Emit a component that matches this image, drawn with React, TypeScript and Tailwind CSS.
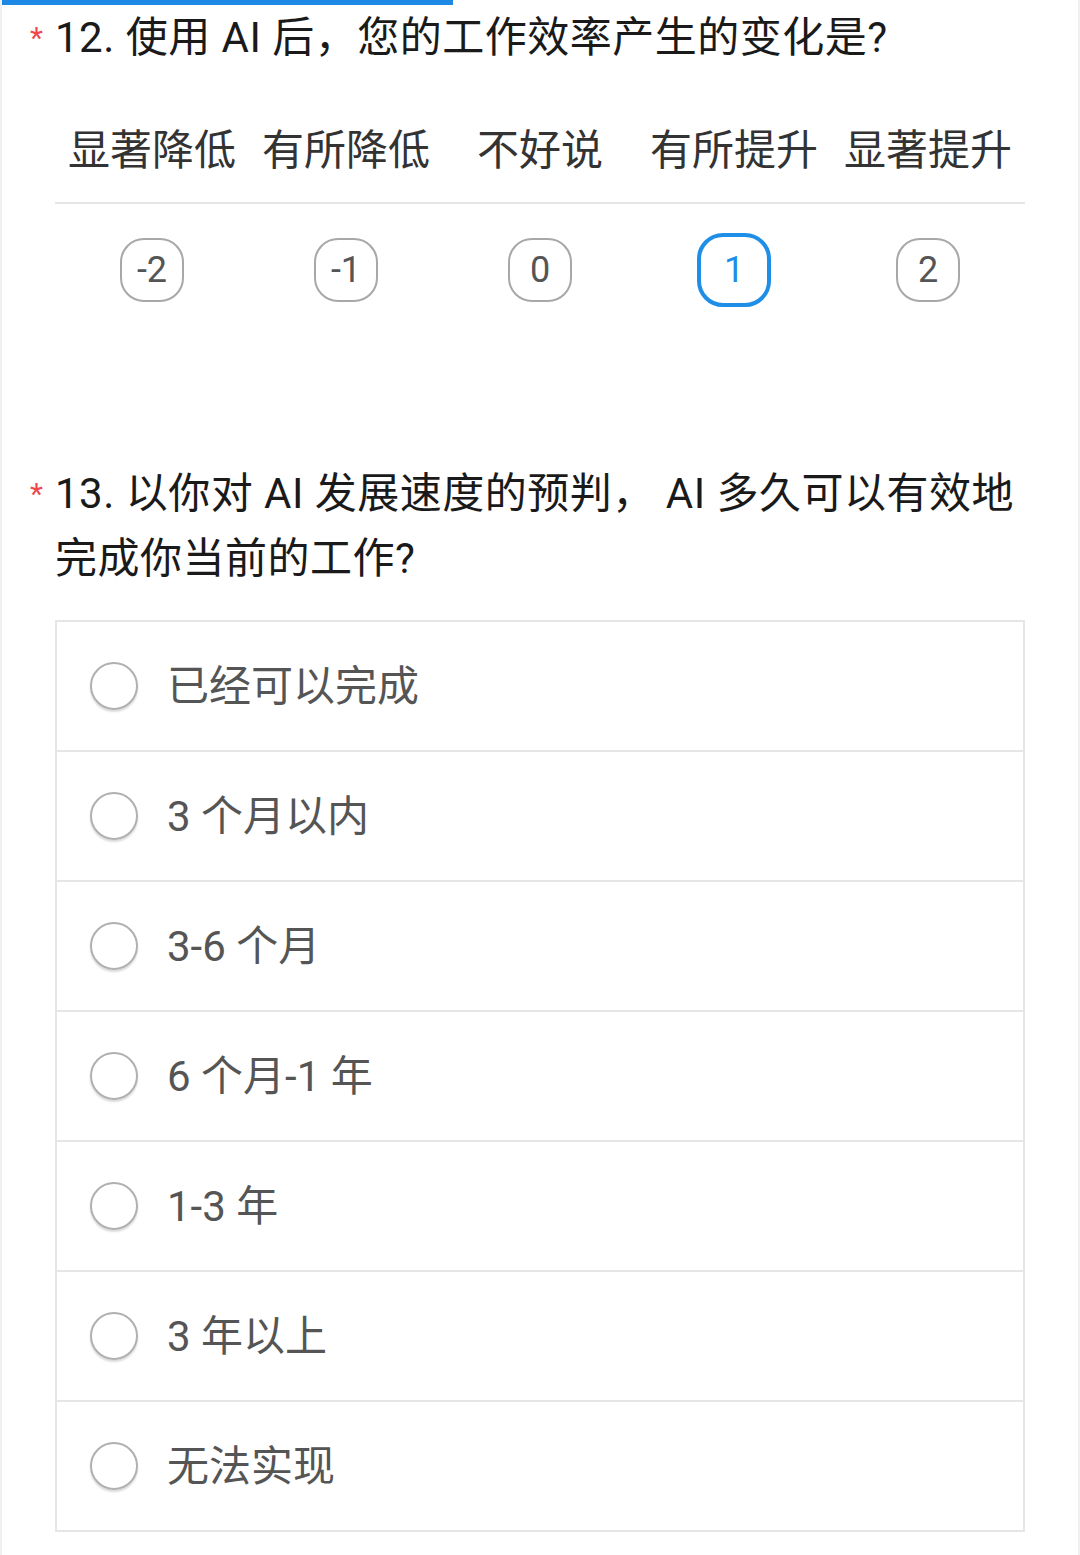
const scaleLabels = ['显著降低', '有所降低', '不好说', '有所提升', '显著提升'];
const scaleValues = ['-2', '-1', '0', '1', '2'];
const selectedValue = '1';

const options = ['已经可以完成', '3 个月以内', '3-6 个月', '6 个月-1 年', '1-3 年', '3 年以上', '无法实现'];

function QuestionTitle({ children }: { children: React.ReactNode }) {
    return (
        <div className="flex pl-[30px] pr-[54px] text-[42px] leading-[65px] text-[#1a1a1a]">
            {/* red star sits in the left gutter */}
            <span className="w-[25px] shrink-0 text-[30px] text-[#f0474f]">*</span>
            <div className="flex-1 tracking-[0.5px]">{children}</div>
        </div>
    );
}

function ScaleQuestion() {
    return (
        <div>
            <QuestionTitle>12. 使用 AI 后，您的工作效率产生的变化是?</QuestionTitle>

            <div className="mx-[55px] mt-[51px] grid grid-cols-5 text-[42px] leading-[60px] text-[#333]">
                {scaleLabels.map((label) => (
                    <div key={label} className="text-center whitespace-nowrap">{label}</div>
                ))}
            </div>

            <div className="mx-[55px] mt-[21px] border-t-2 border-[#e6e6e6]" />

            <div className="mx-[55px] mt-[29px] grid h-[74px] grid-cols-5 items-center">
                {scaleValues.map((v) => (
                    <div key={v} className="flex justify-center">
                        {v === selectedValue ? (
                            <div className="flex h-[74px] w-[74px] items-center justify-center rounded-[26px] border-[4px] border-[#1e8ee6] text-[36px] text-[#1e8ee6]">
                                {v}
                            </div>
                        ) : (
                            <div className="flex h-[64px] w-[64px] items-center justify-center rounded-[24px] border-2 border-[#a8a8a8] text-[36px] text-[#555]">
                                {v}
                            </div>
                        )}
                    </div>
                ))}
            </div>
        </div>
    );
}

function ChoiceQuestion() {
    return (
        <div className="mt-[154px]">
            <QuestionTitle>
                13. 以你对 AI 发展速度的预判， AI 多久可以有效地
                <br />
                完成你当前的工作?
            </QuestionTitle>

            <div className="mx-[55px] mt-[29px] border-2 border-[#e6e6e6]">
                {options.map((opt, i) => (
                    <div
                        key={opt}
                        className={`flex items-center pl-[33px] ${i < options.length - 1 ? 'h-[130px] border-b-2 border-[#e6e6e6]' : 'h-[128px]'}`}
                    >
                        <span className="h-[48px] w-[48px] shrink-0 rounded-full border-2 border-[#b0b0b0] shadow-[0_2px_2px_rgba(0,0,0,0.15)]" />
                        <span className="ml-[29px] text-[42px] text-[#555]">{opt}</span>
                    </div>
                ))}
            </div>
        </div>
    );
}

export default function App() {
    return (
        <div className="relative h-[1555px] w-[1080px] overflow-hidden bg-white font-['Roboto','Noto_Sans_CJK_SC',sans-serif]">
            {/* faint page edges */}
            <div className="pointer-events-none absolute inset-y-0 left-0 w-[2px] bg-[#f0f0f0]" />
            <div className="pointer-events-none absolute inset-y-0 right-0 w-[2px] bg-[#f0f0f0]" />
            {/* progress bar */}
            <div className="h-[5px] w-[453px] bg-[#1e88e5]" />
            <ScaleQuestion />
            <ChoiceQuestion />
        </div>
    );
}
